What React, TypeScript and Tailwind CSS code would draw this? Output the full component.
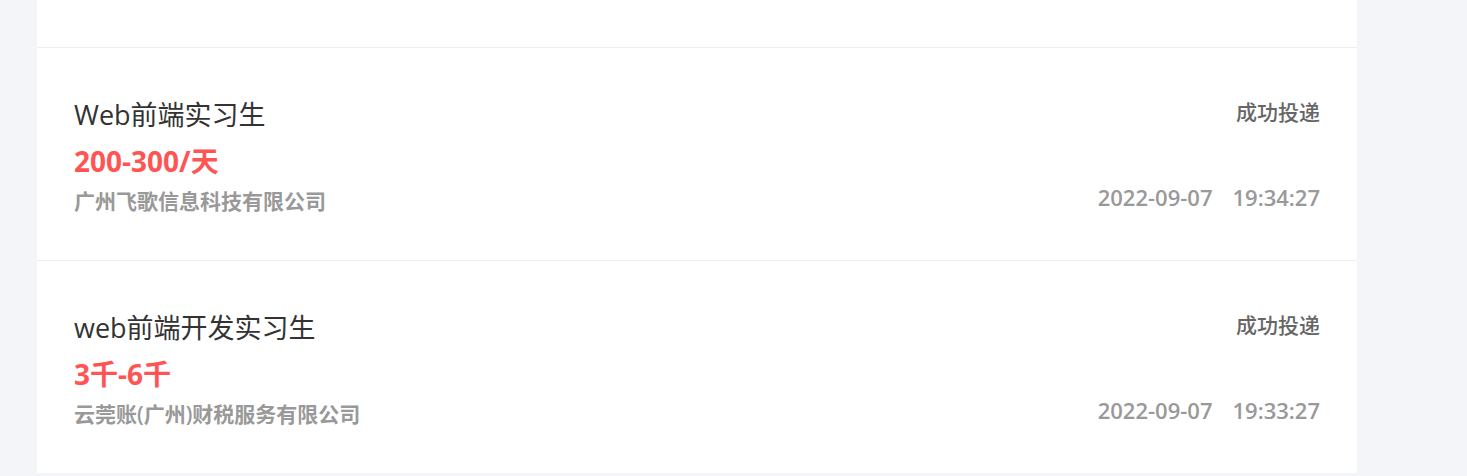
const records = [
  {
    title: 'Web前端实习生',
    salary: '200-300/天',
    company: '广州飞歌信息科技有限公司',
    status: '成功投递',
    date: '2022-09-07',
    time: '19:34:27',
  },
  {
    title: 'web前端开发实习生',
    salary: '3千-6千',
    company: '云莞账(广州)财税服务有限公司',
    status: '成功投递',
    date: '2022-09-07',
    time: '19:33:27',
  },
];

function App() {
  return (
    <div
      className="min-h-screen bg-[#f4f5f9] pl-[37px]"
      style={{ fontFamily: '"Open Sans", "Noto Sans CJK SC", sans-serif' }}
    >
      <div className="w-[1320px] bg-white">
        <div className="h-[48px] border-b border-[#eeeeee]" />
        {records.map((item, i) => (
          <div
            key={item.time}
            className={`flex justify-between px-[37px] pt-[50px] pb-[45px] ${
              i < records.length - 1 ? 'border-b border-[#eeeeee]' : ''
            }`}
          >
            <div className="flex flex-col">
              <h3 className="text-[27px] leading-[34px] text-[#333333]">{item.title}</h3>
              <p className="mt-[12px] text-[28px] font-bold leading-[34px] text-[#ff5454]">
                {item.salary}
              </p>
              <p className="mt-[9px] text-[21px] font-semibold leading-[28px] text-[#999999]">
                {item.company}
              </p>
            </div>
            <div className="flex flex-col items-end">
              <span className="text-[21px] font-medium leading-[28px] text-[#666666]">
                {item.status}
              </span>
              <span className="mt-[57px] text-[22px] font-semibold leading-[28px] text-[#999999]">
                {item.date}
                <span className="ml-[20px]">{item.time}</span>
              </span>
            </div>
          </div>
        ))}
      </div>
    </div>
  );
}

export default App;
